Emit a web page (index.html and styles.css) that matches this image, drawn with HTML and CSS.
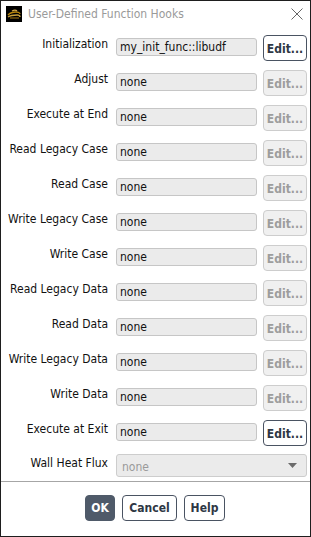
FILE: index.html
```html
<!DOCTYPE html>
<html>
<head>
<meta charset="utf-8">
<link rel="stylesheet" href="styles.css">
</head>
<body>
<div class="window">
  <div class="titlebar">
    <svg class="app-icon" width="16" height="16" viewBox="0 0 16 16">
      <rect width="16" height="16" fill="#000"/>
      <path d="M2 9 C4 7 7 6 10 6 C12 6 14 7 14 8" stroke="#b8860b" stroke-width="1.4" fill="none"/>
      <path d="M2 11 C5 9 8 9 11 9 C13 9 14 10 14 11" stroke="#c9a03a" stroke-width="1.4" fill="none"/>
      <path d="M4 12 C7 12 10 12 13 12" stroke="#8a6410" stroke-width="1.2" fill="none"/>
      <path d="M6 5 C8 4 10 4 11 5" stroke="#d4a84a" stroke-width="1.2" fill="none"/>
    </svg>
    <span class="title">User-Defined Function Hooks</span>
    <svg class="close" width="12" height="12" viewBox="0 0 12 12">
      <path d="M0.5 0.5 L11.5 11.5 M11.5 0.5 L0.5 11.5" stroke="#666" stroke-width="1" fill="none"/>
    </svg>
  </div>
  <div class="form">
    <div class="row"><span class="lbl">Initialization</span><div class="field">my_init_func::libudf</div><button class="btn edit on">Edit...</button></div>
    <div class="row"><span class="lbl">Adjust</span><div class="field">none</div><button class="btn edit off">Edit...</button></div>
    <div class="row"><span class="lbl">Execute at End</span><div class="field">none</div><button class="btn edit off">Edit...</button></div>
    <div class="row"><span class="lbl">Read Legacy Case</span><div class="field">none</div><button class="btn edit off">Edit...</button></div>
    <div class="row"><span class="lbl">Read Case</span><div class="field">none</div><button class="btn edit off">Edit...</button></div>
    <div class="row"><span class="lbl">Write Legacy Case</span><div class="field">none</div><button class="btn edit off">Edit...</button></div>
    <div class="row"><span class="lbl">Write Case</span><div class="field">none</div><button class="btn edit off">Edit...</button></div>
    <div class="row"><span class="lbl">Read Legacy Data</span><div class="field">none</div><button class="btn edit off">Edit...</button></div>
    <div class="row"><span class="lbl">Read Data</span><div class="field">none</div><button class="btn edit off">Edit...</button></div>
    <div class="row"><span class="lbl">Write Legacy Data</span><div class="field">none</div><button class="btn edit off">Edit...</button></div>
    <div class="row"><span class="lbl">Write Data</span><div class="field">none</div><button class="btn edit off">Edit...</button></div>
    <div class="row"><span class="lbl">Execute at Exit</span><div class="field">none</div><button class="btn edit on">Edit...</button></div>
    <div class="row row-select"><span class="lbl">Wall Heat Flux</span>
      <div class="select"><span>none</span>
        <svg class="arrow" width="9" height="5" viewBox="0 0 9 5"><path d="M0 0 H9 L4.5 5 Z" fill="#6b6b6b"/></svg>
      </div>
    </div>
  </div>
  <div class="sep"></div>
  <div class="footer">
    <button class="btn primary">OK</button>
    <button class="btn on cancel">Cancel</button>
    <button class="btn on help">Help</button>
  </div>
</div>
</body>
</html>
```
FILE: styles.css
```css
* { box-sizing: border-box; }
html, body { margin: 0; padding: 0; background: #fff; }
body {
  font-family: "DejaVu Sans Condensed", "DejaVu Sans", sans-serif;
  font-stretch: condensed;
  font-size: 12px;
  color: #111;
}
.window {
  width: 311px;
  height: 537px;
  border: 1px solid #1e1e1e;
  background: #fff;
  display: flex;
  flex-direction: column;
}
.titlebar {
  height: 29px;
  display: flex;
  align-items: center;
  padding-left: 5px;
  padding-right: 7px;
}
.app-icon { flex: none; margin-top: -3px; }
.title {
  margin-left: 6px;
  color: #9a9a9a;
  font-size: 12px;
  flex: 1;
  margin-top: -3px;
}
.close { flex: none; margin-top: -3px; }
.form {
  padding-top: 5px;
  display: flex;
  flex-direction: column;
  gap: 9px;
}
.row {
  display: flex;
  height: 26px;
}
.lbl {
  width: 107px;
  text-align: right;
  padding-top: 2px;
  line-height: 14px;
  white-space: nowrap;
}
.field {
  margin-left: 8px;
  margin-top: 3px;
  width: 141px;
  height: 18px;
  background: #ebebeb;
  border: 1px solid #c6c6c6;
  border-radius: 3px;
  padding-left: 3px;
  line-height: 17px;
  color: #111;
  white-space: nowrap;
  overflow: hidden;
}
.btn {
  font-family: inherit;
  font-stretch: condensed;
  font-size: 12px;
  font-weight: bold;
  height: 26px;
  border-radius: 4px;
  padding: 0;
  margin: 0;
  background: #fff;
}
.edit {
  margin-left: 6px;
  width: 44px;
  padding-top: 2px;
}
.on {
  border: 1px solid #4a5362;
  color: #2e3744;
  background: #fff;
}
.off {
  border: 1px solid #cdcdcd;
  color: #9d9d9d;
  background: #f0f0f0;
}
.row-select {
  margin-top: -1px;
  height: 23px;
}
.select {
  margin-left: 8px;
  width: 191px;
  height: 23px;
  background: #ebebeb;
  border: 1px solid #cdcdcd;
  border-radius: 3px;
  display: flex;
  align-items: center;
  justify-content: space-between;
  padding-left: 5px;
  padding-right: 9px;
  color: #9a9a9a;
  padding-top: 2px;
}
.arrow { flex: none; margin-top: -2px; }
.sep {
  margin-top: 4px;
  height: 1px;
  background: #a6a6a6;
}
.footer {
  padding-top: 13px;
  display: flex;
  justify-content: center;
  gap: 7px;
  padding-right: 1px;
}
.primary {
  width: 30px;
  background: #4f5a69;
  border: 1px solid #4f5a69;
  color: #fff;
}
.cancel { width: 55px; }
.help { width: 41px; }
```
